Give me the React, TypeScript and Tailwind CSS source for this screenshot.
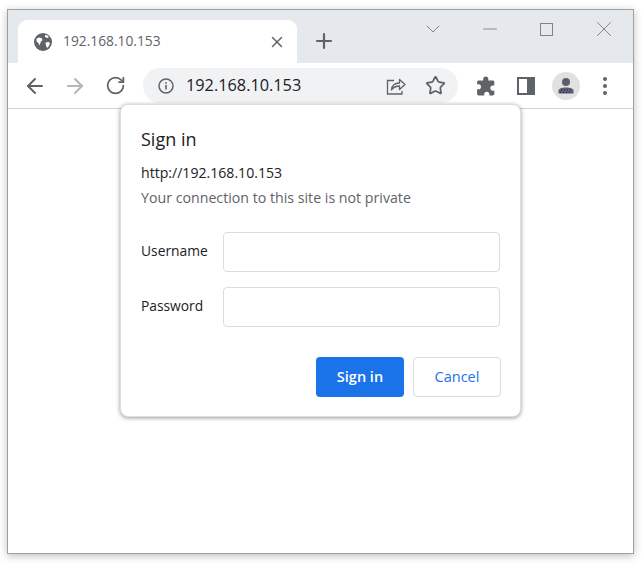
import { ArrowLeft, ArrowRight, RotateCw, Star, X, Plus, ChevronDown, Minus } from "lucide-react";

function GlobeIcon() {
  return (
    <svg width="18" height="18" viewBox="0 0 18 18" className="shrink-0">
      <circle cx="9" cy="9" r="9" fill="#5f6368" />
      <path d="M2.500 5.500l2.500-1 2.500.5 1 2-1.500 1.500-1 2.500-1 1.500-.5-2.500-2-1.500zM11 2l2.500.5 1.500 1.500-1.500 1-2.500-1zM11.500 9.500l3-.5 1.500 1-1 3-2 2-1-2.500z" fill="#fff" />
    </svg>
  );
}

function InfoIcon() {
  return (
    <svg width="16" height="16" viewBox="0 0 16 16" fill="none" className="shrink-0">
      <circle cx="8" cy="8" r="7" stroke="#5f6368" strokeWidth="1.500" />
      <rect x="7.200" y="7" width="1.600" height="4.500" fill="#5f6368" />
      <rect x="7.200" y="4.200" width="1.600" height="1.600" fill="#5f6368" />
    </svg>
  );
}

function ShareIcon() {
  return (
    <svg width="20" height="20" viewBox="0 0 20 20" fill="none" stroke="#5f6368" strokeWidth="1.300">
      <path d="M8 4.500H1.500v13.500h14.500v-3" />
      <path d="M5.500 14c.5-4.500 3.500-7 8-7V3.500l5.500 5-5.500 5v-3.500c-3.500 0-6 1-8 4z" strokeLinejoin="round" />
    </svg>
  );
}

function PuzzleIcon() {
  return (
    <svg width="20" height="20" viewBox="0 0 18 18" fill="#5f6368">
      <path d="M6.500 2.800a2.300 2.300 0 0 1 4.600 0V4h4.100c.7 0 1.300.6 1.300 1.300v3.300h-1.300a2.300 2.300 0 0 0 0 4.600h1.300v3.100c0 .7-.6 1.300-1.300 1.300H12v-1.200a2.300 2.300 0 0 0-4.600 0v1.200H2.300c-.7 0-1.300-.6-1.300-1.300V12h1.200a2.300 2.300 0 0 0 0-4.600H1V5.300C1 4.600 1.600 4 2.300 4h4.200z" />
    </svg>
  );
}

function SidePanelIcon() {
  return (
    <svg width="18" height="18" viewBox="0 0 18 18" fill="none">
      <rect width="18" height="18" fill="#5f6368" />
      <rect x="2" y="2" width="8" height="14" fill="#fff" />
    </svg>
  );
}

function ProfileIcon() {
  return (
    <div className="w-7 h-7 rounded-full bg-[#e0e1e3] flex items-center justify-center">
      <svg width="16" height="16" viewBox="0 0 16 16">
        <circle cx="8" cy="4" r="4" fill="#5a5f6b" />
        <path d="M0.500 15.500v-3c0-2 3.500-3 7.500-3s7.500 1 7.500 3v3z" fill="#5a5f6b" />
        <path d="M3 12h1M6 12h1M9 12h1M12 12h1M2 14.500h1M5 14.500h1M8 14.500h1M11 14.500h1" stroke="#1a237e" strokeWidth="1" />
      </svg>
    </div>
  );
}

function Field({ label }: { label: string }) {
  return (
    <div className="flex items-center h-10">
      <label className="w-[82px] pb-px text-[13.800px] text-[#202124]">{label}</label>
      <input className="w-[277px] h-10 border border-[#dadce0] rounded-[4px] bg-white" />
    </div>
  );
}

export default function App() {
  return (
    <div className="w-[642px] h-[565px] bg-white pt-[9px] pl-[7px] font-['Open_Sans','Noto_Sans',sans-serif]">
      <div className="relative w-[627px] h-[545px] border border-[#a0a0a0] bg-white flex flex-col shadow-[0_2px_8px_rgba(0,0,0,0.25)]">
        {/* Tab strip */}
        <div className="h-[53px] bg-[#e5e8ec] flex items-end pl-[10px]">
          <div className="w-[279px] h-[43px] bg-white rounded-t-[9px] flex items-center pl-[16px] pr-[11px]">
            <GlobeIcon />
            <span className="ml-[11px] text-[13.800px] text-[#5f6368] flex-1">192.168.10.153</span>
            <X size={18} strokeWidth={2} className="text-[#5f6368] shrink-0" />
          </div>
          <div className="ml-[17px] mb-[12px] w-5 h-5 flex items-center justify-center">
            <Plus size={24} strokeWidth={2.200} className="text-[#5f6368] shrink-0" />
          </div>
          {/* Window controls */}
          <div className="ml-auto self-start flex items-center text-[#85808a] pt-[9px] pr-px">
            <div className="w-[57px] h-5 flex items-center justify-center"><ChevronDown size={24} strokeWidth={1} className="shrink-0" /></div>
            <div className="w-[57px] h-5 flex items-center justify-center"><Minus size={22} strokeWidth={1} className="shrink-0" /></div>
            <div className="w-[57px] h-5 flex items-center justify-center"><div className="w-[13px] h-[13px] border border-[#85808a]" /></div>
            <div className="w-[57px] h-5 flex items-center justify-center"><X size={26} strokeWidth={0.900} className="shrink-0" /></div>
          </div>
        </div>
        {/* Toolbar */}
        <div className="h-[46px] border-b border-[#d0d2d5] flex items-center pl-[15px]">
          <ArrowLeft size={24} strokeWidth={2} className="text-[#5f6368] shrink-0" />
          <ArrowRight size={24} strokeWidth={2} className="text-[#b5b7ba] ml-[16px] shrink-0" />
          <RotateCw size={21} strokeWidth={2} className="text-[#5f6368] ml-[18px] shrink-0" />
          <div className="ml-[17px] w-[315px] h-[35px] rounded-full bg-[#f0f2f4] flex items-center pl-[15px] pr-[12px] shrink-0">
            <InfoIcon />
            <span className="ml-[12px] text-[16.300px] text-[#202124] flex-1">192.168.10.153</span>
            <ShareIcon />
            <Star size={21} strokeWidth={2} className="text-[#5f6368] ml-[19px] shrink-0" />
          </div>
          <div className="ml-[18px]"><PuzzleIcon /></div>
          <div className="ml-[21px]"><SidePanelIcon /></div>
          <div className="ml-[17px]"><ProfileIcon /></div>
          <div className="ml-[23px] flex flex-col gap-[3px]">
            <span className="w-[4px] h-[4px] rounded-full bg-[#5f6368]" />
            <span className="w-[4px] h-[4px] rounded-full bg-[#5f6368]" />
            <span className="w-[4px] h-[4px] rounded-full bg-[#5f6368]" />
          </div>
        </div>
        {/* Sign in dialog */}
        <div className="absolute left-[112px] top-[94px] w-[401px] h-[313px] bg-white border border-[#dcdde0] rounded-[8px] shadow-[0_1px_4px_rgba(0,0,0,0.4)] px-[20px] pt-[22px]">
          <h1 className="text-[18px] leading-6 text-[#202124]">Sign in</h1>
          <p className="mt-[12px] text-[14.100px] leading-5 text-[#202124]">http://192.168.10.153</p>
          <p className="mt-[5px] text-[14.200px] leading-5 text-[#5f6368]">Your connection to this site is not private</p>
          <div className="mt-[24px] flex flex-col gap-[15px]">
            <Field label="Username" />
            <Field label="Password" />
          </div>
          <div className="mt-[30px] flex justify-end gap-[9px] mr-[-1px]">
            <button className="w-[88px] h-10 pb-px bg-[#1a73e8] rounded-[4px] text-white text-[14.500px] font-semibold">Sign in</button>
            <button className="w-[88px] h-10 pb-px bg-white border border-[#dadce0] rounded-[4px] text-[#1a73e8] text-[14.500px]">Cancel</button>
          </div>
        </div>
      </div>
    </div>
  );
}
